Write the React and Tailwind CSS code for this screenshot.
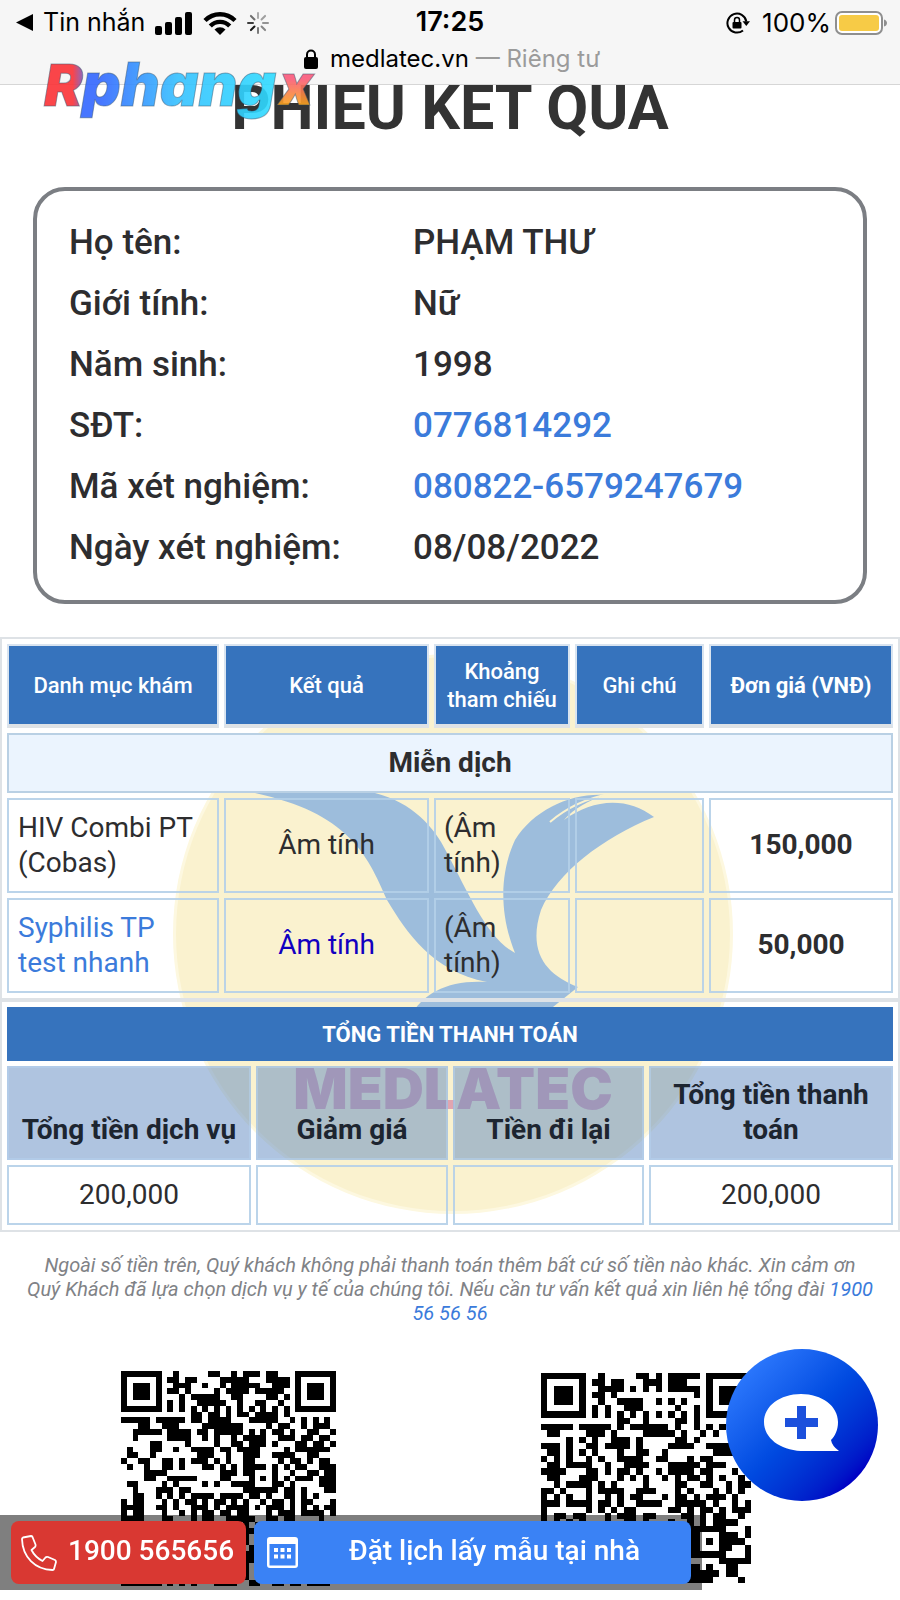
import React from "react";

const patient = [
  { label: "Họ tên:", value: "PHẠM THƯ" },
  { label: "Giới tính:", value: "Nữ" },
  { label: "Năm sinh:", value: "1998" },
  { label: "SĐT:", value: "0776814292", href: "tel:0776814292" },
  { label: "Mã xét nghiệm:", value: "080822-6579247679", href: "#ma" },
  { label: "Ngày xét nghiệm:", value: "08/08/2022" },
];

const tests = [
  { name: "HIV Combi PT (Cobas)", result: "Âm tính", range: "(Âm tính)", price: "150,000" },
  { name: "Syphilis TP test nhanh", result: "Âm tính", range: "(Âm tính)", price: "50,000", link: true },
];

// one string per module row, # is a dark module
const qrLeft = [
  "#######..#.....##..#.###.##...#######",
  "#.....#.##.##....#####...####.#.....#",
  "#.###.#..###..#..#.#####..###.#.###.#",
  "#.###.#.##.#....#.####.#####..#.###.#",
  "#.###.#...#.#####..##....##.#.#.###.#",
  "#.....#.#.#..#####..#..##..#..#.....#",
  "#######.#.#.#.#.#.#.#.#.#.#.#.#######",
  "............##.##.#.##.####.#........",
  "#####.#####.##.####...#####..#.#.#.#.",
  "...##..###....#######....#.##..#.###.",
  "..#####.####.##.#####.#.#.##.#..##..#",
  "..#.....####..#.#..#.####..###.##.##.",
  ".....##....#....#..##.###.#...##.##.#",
  ".#...##..#..####.##.####....#.######.",
  ".##..#.......###..#..###..####..##...",
  "#..##..##.#.###.#.#..##....#.##.#.##.",
  ".#..#..##.#...##.#.#.####.#.#.##..###",
  "....####.........###.##...#..#..##.##",
  "....##..#####....##...#.#.#.#.###.###",
  ".##....#.#....#.#..####...##.#....###",
  "..#...###.##.........######.##.#...##",
  "..##..#.#.#.####.####.##.#..##.#.#...",
  "#.##...#.#.##.#.##.#.#..#.##.#.##...#",
  "####..##.#..###.#.####.#.###.#.#.#.##",
  "#.##...#..#.#.##.##.##...#.###.####.#",
  "####...##...#.##..#####..##.##....#..",
  "..#.#.##..#..##.#..#.#.##..#.#.##.#.#",
  "##..##.#.##.#..##.#.###.#..##.#..##.#",
  "#..#.##.#..##.#.#.##.#..##.#..#.#..#.",
  "........##.#..#.##..##.#..#.##.#..##.",
  "#######.#..##.#..#.#..#.##..#.#.#.#.#",
  "#.....#..##..#.##.#..##..#.##...#..#.",
  "#.###.#.#..##.#..##.###.#...#######.#",
  "#.###.#..#.#..##.#.#.#..##.#..#..#.#.",
  "#.###.#.##..#.#..##.##.#..#.##..#..##",
  "#.....#..#.##..#.#.###..##.#..##.#.#.",
  "#######.#.#.#...####..##..##.##.####.",
];

const qrRight = [
  "#######..#.....##.#.#####.#######",
  "#.....#.##.##...###.###...#.....#",
  "#.###.#..####.#.#.#.#####.#.###.#",
  "#.###.#.##.#............#.#.###.#",
  "#.###.#..#..####..#.#.#...#.###.#",
  "#.....#.#.#..###.....#..#.#.....#",
  "#######.#.#.#.#.#.#.#.#.#.#######",
  "............##..#....##.#........",
  "#####.#####.#.######.#..#.#.#..#.",
  ".##....###.#....#####.#..#.#..###",
  "....#.#.#..###.#.....##.#........",
  "###.#..##.####.#....####..####...",
  ".##.#.#.#...#..##..#.......####..",
  "#.#.#..#.#..####..##...#.##......",
  ".##.####..#..####...#####.###....",
  "####...##.#.##.#..#.####.##...#..",
  ".##...###...#.#.#..#.#.##.#.#..#.",
  "..#.####.#.#....#....##..##..#.##",
  "##.#...#.####..###...#.#...#.#.#.",
  "#.#.#..#..#.#.##...#.##.#.###.#..",
  "###.####.##.#..####..#####.#..#.#",
  "#......#.#.#.##.....##.#.##.#.###",
  "#.##.##...#.###.##....##.#.##..#.",
  "#.#.#.#...#..##.#...#..#.#.####..",
  "........#.##.#..#.#.##.######...#",
  "#######.#..#..##.#..#..##...###.#",
  "#.....#..##.#.#..#.##.###.#.####.",
  "#.###.#.#..#.##.#..#.#.##...##..#",
  "#.###.#..#.##..#.##..#.######...#",
  "#.###.#.##..#.#..#.##.#.....#####",
  "#.....#..#.##..##.#..#.##.#..##..",
  "#######.#..#.##..#.##..#####.##..",
  "#.#.#.#..##.#..#.##.#..####....#.",
];

const QrCode = ({ rows, className, label }) => {
  const d = rows
    .map((row, y) =>
      [...row].map((m, x) => (m === "#" ? `M${x} ${y}h1v1h-1z` : "")).join(""),
    )
    .join("");

  return (
    <svg
      viewBox={`0 0 ${rows[0].length} ${rows.length}`}
      className={className}
      shapeRendering="crispEdges"
      role="img"
      aria-label={label}
    >
      <path d={d} />
    </svg>
  );
};

const SignalIcon = () => (
  <svg viewBox="0 0 38 24" className="h-6 w-[38px]">
    <rect x="0" y="15" width="7" height="9" rx="2" />
    <rect x="10" y="11" width="7" height="13" rx="2" />
    <rect x="20" y="6" width="7" height="18" rx="2" />
    <rect x="30" y="1" width="7" height="23" rx="2" />
  </svg>
);

const WifiIcon = () => (
  <svg viewBox="0 0 34 24" className="h-6 w-[34px]">
    <g fill="none" stroke="#000" strokeWidth="4.4">
      <path d="M2 9.500A21 21 0 0 1 32 9.500" />
      <path d="M7.300 15A13.500 13.500 0 0 1 26.700 15" />
    </g>
    <path d="M17 24l-5.500-5.400a7.800 7.800 0 0 1 11 0z" />
  </svg>
);

const spokes = [0.3, 0.35, 0.4, 0.45, 0.5, 0.9, 0.75, 0.55];

const Spinner = () => (
  <svg viewBox="-11 -11 22 22" className="size-[22px]">
    {spokes.map((opacity, i) => (
      <path
        key={i}
        d="M0-5V-10"
        stroke="#000"
        strokeWidth="2"
        strokeLinecap="round"
        opacity={opacity}
        transform={`rotate(${i * 45})`}
      />
    ))}
  </svg>
);

const RotationLock = () => (
  <svg viewBox="0 0 24 22" className="h-[22px] w-6">
    <path
      d="M20.300 9.500A9.500 9.500 0 1 0 17 18.400"
      fill="none"
      stroke="#000"
      strokeWidth="2"
    />
    <path d="M16.500 9.200H24L20.300 14z" />
    <rect x="6.500" y="10" width="9" height="6.500" rx="1" />
    <path
      d="M8.500 10V8a2.500 2.500 0 0 1 5 0v2"
      fill="none"
      stroke="#000"
      strokeWidth="1.500"
    />
  </svg>
);

const BatteryIcon = () => (
  <svg viewBox="0 0 53 24" className="h-6 w-[53px]">
    <rect x="1" y="1" width="46" height="22" rx="6" fill="#fff" stroke="#8f8f8f" strokeWidth="2" />
    <rect x="4" y="4" width="40" height="16" rx="3" fill="#f7cb46" />
    <path d="M49 8.500c4 1 4 6 0 7z" fill="#8f8f8f" />
  </svg>
);

const SiteLogo = () => (
  <svg
    viewBox="0 0 290 90"
    className="pointer-events-none absolute left-10 top-[46px] z-20 h-[90px] w-[290px]"
    role="img"
    aria-label="RphangX"
  >
    <defs>
      <linearGradient id="logoR" x1="0" x2="1" y1="0" y2="0">
        <stop offset="0.7" stopColor="#fb3237" />
        <stop offset="1" stopColor="#6a5fd0" />
      </linearGradient>
      <linearGradient id="logoMain" x1="0" x2="1" y1="0" y2="0">
        <stop offset="0.1" stopColor="#3468ff" />
        <stop offset="0.5" stopColor="#36c2ff" />
        <stop offset="1" stopColor="#2fdcff" />
      </linearGradient>
      <linearGradient id="logoX" x1="0" x2="0" y1="0" y2="1">
        <stop offset="0.4" stopColor="#fb5a7c" />
        <stop offset="0.8" stopColor="#f9a51a" />
      </linearGradient>
    </defs>
    <g
      fontFamily="Inter, sans-serif"
      fontStyle="italic"
      fontWeight="900"
      stroke="#2a4a66"
      strokeOpacity="0.5"
      opacity="0.9"
    >
      <text x="4" y="60" fontSize="58" fill="url(#logoR)">R</text>
      <text x="42" y="60" fontSize="60" fill="url(#logoMain)">phang</text>
      <text x="239" y="59" fontSize="56" fill="url(#logoX)">x</text>
    </g>
  </svg>
);

const StatusBar = () => (
  <header className="sticky top-0 z-10 h-[85px] border-b border-[#d6d6d6] bg-[#f6f6f6] font-['Inter',sans-serif] text-black">
    <div className="relative flex h-[45px] items-center justify-between pl-4 pr-3 text-[25px]">
      <div className="flex items-center gap-[10px]">
        <svg viewBox="0 0 17 17" className="size-[17px]">
          <path d="M0 8.500L17 0v17z" />
        </svg>
        <span>Tin nhắn</span>
        <SignalIcon />
        <WifiIcon />
        <Spinner />
      </div>
      <time className="absolute left-1/2 -translate-x-1/2 text-[27px] font-semibold">
        17:25
      </time>
      <div className="flex items-center gap-1">
        <RotationLock />
        <span className="pl-2 text-[26px]">100%</span>
        <BatteryIcon />
      </div>
    </div>
    <div className="flex items-center justify-center gap-3 pl-1 text-2xl leading-7">
      <svg viewBox="0 0 14 20" className="h-5 w-[14px]">
        <rect y="8" width="14" height="12" rx="2" />
        <path d="M3 9V5.500a4 4 0 0 1 8 0V9" fill="none" stroke="#000" strokeWidth="2" />
      </svg>
      <p>
        medlatec.vn <span className="text-[#9b9b9b]">— Riêng tư</span>
      </p>
    </div>
  </header>
);

// brand mark sits behind both tables
const Watermark = () => (
  <svg
    viewBox="0 0 562 562"
    className="absolute left-[172px] top-4 -z-10 size-[562px]"
    aria-hidden="true"
  >
    <circle cx="281" cy="281" r="280" fill="#fdf8e0" />
    <circle cx="281" cy="281" r="277" fill="#faf2cf" />
    <path
      fill="#9dbddc"
      d="M83 140H203C240 149 263 175 274 198C298 243 315 285 343 300C325 255 330 215 343 187C362 157 398 140 433 142C418 147 402 155 392 167C420 146 455 143 482 164C430 185 385 220 369 257C355 300 375 322 406 334L381 354C370 364 355 374 340 384H230C240 345 270 326 315 329C260 318 235 280 215 247C195 200 175 160 83 140Z"
    />
    <path d="M378 169C393 156 412 146 437 141" fill="none" stroke="#faf2cf" strokeWidth="2" />
    <text
      x="281"
      y="456"
      textAnchor="middle"
      fontFamily="Inter, sans-serif"
      fontWeight="900"
      fontSize="57"
      fill="#e0a5b0"
    >
      MEDLATEC
    </text>
  </svg>
);

const ResultTable = () => (
  <table className="w-full table-fixed border-separate border-spacing-[5px] border-2 border-[#dee2e6] text-[28px] leading-[35px]">
    <colgroup>
      <col className="w-[212px]" />
      <col className="w-[205px]" />
      <col className="w-[136px]" />
      <col className="w-[129px]" />
      <col className="w-[184px]" />
    </colgroup>
    <thead>
      <tr className="h-[84px] text-[22px] leading-7 text-white">
        {["Danh mục khám", "Kết quả", "Khoảng tham chiếu", "Ghi chú"].map((head) => (
          <th
            key={head}
            className="border-2 border-b-4 border-[#d9e4f0] border-b-[#dee2e6] bg-[#3673bd] bg-clip-padding px-2 pt-[2px] font-medium"
          >
            {head}
          </th>
        ))}
        <th className="border-2 border-b-4 border-[#d9e4f0] border-b-[#dee2e6] bg-[#3673bd] bg-clip-padding pt-[2px] font-bold">
          Đơn giá (VNĐ)
        </th>
      </tr>
    </thead>
    <tbody>
      <tr className="h-[60px]">
        <th colSpan={5} className="border-2 border-[#b9d0e4] bg-[#ebf4fe] pb-[2px] font-bold">
          Miễn dịch
        </th>
      </tr>
      {tests.map((test) => (
        <tr key={test.name} className="h-[95px]">
          <td className="border-2 border-[#b4cfe8]/90 pb-[2px] pl-[9px]">
            {test.link ? (
              <a href="#syphilis" className="block w-40 text-[#3b7bdb]">
                {test.name}
              </a>
            ) : (
              test.name
            )}
          </td>
          <td
            className={`border-2 border-[#b4cfe8]/90 pb-[2px] text-center ${test.link ? "text-[#1200c0]" : ""}`}
          >
            {test.result}
          </td>
          <td className="border-2 border-[#b4cfe8]/90 pb-[2px] pl-2 pr-12">{test.range}</td>
          <td className="border-2 border-[#b4cfe8]/90"></td>
          <td className="border-2 border-[#b4cfe8]/90 pb-[2px] text-center font-bold">
            {test.price}
          </td>
        </tr>
      ))}
    </tbody>
  </table>
);

const TotalTable = () => (
  <table className="w-full table-fixed border-separate border-spacing-[5px] border-2 border-[#dee2e6] text-center text-[28px] leading-[35px]">
    <colgroup>
      <col className="w-[244px]" />
      <col className="w-[192px]" />
      <col className="w-[191px]" />
      <col className="w-[244px]" />
    </colgroup>
    <thead>
      <tr className="h-[54px]">
        <th colSpan={4} className="bg-[#3673bd] text-[22px] font-bold text-white">
          TỔNG TIỀN THANH TOÁN
        </th>
      </tr>
      <tr className="h-[94px] text-[#1d2530]">
        {["Tổng tiền dịch vụ", "Giảm giá", "Tiền đi lại", "Tổng tiền thanh toán"].map(
          (head) => (
            <th
              key={head}
              className="border-2 border-[#b4d0ec]/60 bg-[#6089c1]/50 px-2 pb-[11px] align-bottom font-bold"
            >
              {head}
            </th>
          ),
        )}
      </tr>
    </thead>
    <tbody>
      <tr className="h-[60px]">
        <td className="border-2 border-[#b4cfe8]/90 pb-[2px]">200,000</td>
        <td className="border-2 border-[#b4cfe8]/90"></td>
        <td className="border-2 border-[#b4cfe8]/90"></td>
        <td className="border-2 border-[#b4cfe8]/90 pb-[2px]">200,000</td>
      </tr>
    </tbody>
  </table>
);

const App = () => {
  return (
    <div className="relative min-h-screen overflow-x-clip bg-white font-['Roboto',sans-serif] text-[#2d2d2f]">
      <StatusBar />
      <SiteLogo />

      <main>
        <h1 className="-mt-4 text-center text-[61px] font-bold leading-[78px] text-[#333]">
          PHIẾU KẾT QUẢ
        </h1>

        {/* Patient info */}
        <dl className="mx-[33px] mt-10 rounded-[32px] border-4 border-[#7b7e83] pb-[22px] pl-8 pt-[21px] text-[35px] font-medium leading-[61px]">
          {patient.map((item) => (
            <div key={item.label} className="flex">
              <dt className="w-[344px] shrink-0">{item.label}</dt>
              <dd>
                {item.href ? (
                  <a href={item.href} className="text-[#3b7bdb]">
                    {item.value}
                  </a>
                ) : (
                  item.value
                )}
              </dd>
            </div>
          ))}
        </dl>

        <section className="relative isolate mt-[33px]">
          <Watermark />
          <ResultTable />
          <TotalTable />
        </section>

        <p className="mt-[21px] px-6 text-center text-xl leading-6 italic text-[#808286]">
          Ngoài số tiền trên, Quý khách không phải thanh toán thêm bất cứ số tiền
          nào khác. Xin cảm ơn Quý&nbsp;Khách đã lựa chọn dịch vụ y tế của chúng
          tôi. Nếu cần tư vấn kết quả xin liên hệ tổng đài{" "}
          <a href="tel:1900565656" className="text-[#3b7bdb]">
            1900 56&nbsp;56&nbsp;56
          </a>
        </p>

        <div className="mt-[46px] flex gap-[205px] pl-[121px]">
          <QrCode rows={qrLeft} className="size-[215px]" label="QR 1" />
          <QrCode rows={qrRight} className="mt-[2px] size-[210px]" label="QR 2" />
        </div>
      </main>

      {/* Contact bar */}
      <nav className="fixed bottom-[10px] left-0 z-10 flex h-[75px] w-[78%] gap-2 bg-black/50 px-[11px] py-[6px] text-[28px] font-medium text-white">
        <a
          href="tel:1900565656"
          className="flex w-[235px] shrink-0 items-center gap-[11px] rounded-lg bg-[#d93832] pl-[10px]"
        >
          <svg viewBox="0 0 36 36" className="size-9" fill="none" stroke="#fff" strokeWidth="1.800" strokeLinejoin="round">
            <path d="M2 2.500L10 1Q11 1 11.500 2L14.500 9.500Q15 11 14 12L10.500 15Q14 22 21.500 26L24.500 22.500Q25.500 21.500 27 22L34 25Q35 25.500 35 27L33 34Q32.800 35 31.500 35C14 34.500 1.500 22 1 4Q1 3 2 2.500Z" />
          </svg>
          <span className="pb-1">1900 565656</span>
        </a>
        <button
          type="button"
          className="flex flex-1 items-center rounded-lg bg-[#3a82f5] pl-[13px]"
        >
          <svg viewBox="0 0 31 31" className="size-[31px]">
            <path
              fill="#fff"
              fillRule="evenodd"
              d="M3 0H28Q31 0 31 3V28Q31 31 28 31H3Q0 31 0 28V3Q0 0 3 0ZM2.500 7V28.500H28.500V7Z"
            />
            <path
              fill="#fff"
              d="M7 11h4v4H7zM13.500 11h4v4h-4zM20 11h4v4h-4zM7 17.500h4v4H7zM13.500 17.500h4v4h-4zM20 17.500h4v4h-4z"
            />
          </svg>
          <span className="flex-1 pb-1 text-center">Đặt lịch lấy mẫu tại nhà</span>
        </button>
      </nav>

      <button
        type="button"
        aria-label="Chat"
        className="fixed bottom-[99px] right-[22px] z-20 size-[152px] rounded-full bg-linear-to-br from-[#2f7bff] from-10% to-[#0000c4] to-85%"
      >
        <svg viewBox="0 0 152 152" className="size-[152px]">
          <path
            fill="#fff"
            d="M75 45C96 45 112 57 112 73C112 81 109 87 105 91Q106 97 113 102H75C54 101 38 89 38 73C38 57 54 45 75 45Z"
          />
          <path fill="#1c50dc" d="M71 57h9v12h12v9H80v12h-9V78H59v-9h12z" />
        </svg>
      </button>
    </div>
  );
};

export default App;
